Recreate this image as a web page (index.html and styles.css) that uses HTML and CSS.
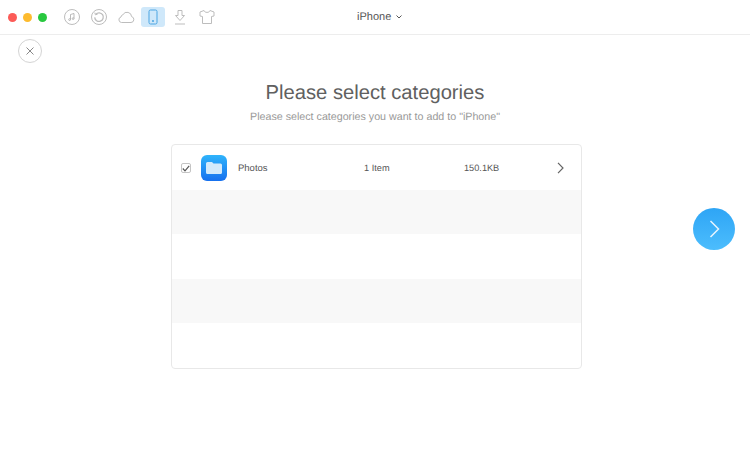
FILE: index.html
```html
<!DOCTYPE html>
<html lang="en">
<head>
    <meta charset="UTF-8">
    <meta name="viewport" content="width=device-width, initial-scale=1.0">
    <title>Please select categories</title>
    <link rel="stylesheet" href="styles.css">
</head>
<body>
    <div class="toolbar">
        <div class="lights">
            <span class="light red"></span>
            <span class="light yellow"></span>
            <span class="light green"></span>
        </div>
        <div class="tools">
            <span class="tool">
                <svg width="18" height="18" viewBox="0 0 18 18" fill="none" stroke="#bdbdbd">
                    <circle cx="9" cy="9" r="7.5"/>
                    <path d="M7.5 11.500V6.500L11 5.500V10.500" stroke="#aaa" stroke-width=".8"/>
                    <circle cx="6.600" cy="11.600" r=".9" stroke="#aaa" stroke-width=".8"/>
                    <circle cx="10.100" cy="10.600" r=".9" stroke="#aaa" stroke-width=".8"/>
                </svg>
            </span>
            <span class="tool">
                <svg width="18" height="18" viewBox="0 0 18 18" fill="none" stroke="#bdbdbd">
                    <circle cx="9" cy="9" r="7.500"/>
                    <path d="M5.800 6.200A4.300 4.300 0 1 1 4.700 9.400" stroke-width="1.300"/>
                    <path d="M4.800 4.600L5.400 6.800L7.600 6.200"/>
                </svg>
            </span>
            <span class="tool">
                <svg width="18" height="14" viewBox="0 0 18 14" fill="none" stroke="#bdbdbd">
                    <path d="M4.500 12.500H14a3 3 0 0 0 .6-5.900A4.600 4.600 0 0 0 6 4.600 2.800 2.800 0 0 0 4 7 2.800 2.800 0 0 0 4.500 12.500Z"/>
                </svg>
            </span>
            <span class="tool active">
                <svg width="10" height="16" viewBox="0 0 10 16" fill="none" stroke="#4aa5e3">
                    <rect x="1" y="1" width="8" height="14" rx="1.500"/>
                    <circle cx="5" cy="12" r=".6" fill="#4aa5e3"/>
                </svg>
            </span>
            <span class="tool">
                <svg width="14" height="17" viewBox="0 0 14 17" fill="none" stroke="#bdbdbd">
                    <path d="M5 1.500H9V6.500H11.500L7 11.500 2.500 6.500H5Z"/>
                    <path d="M2 15H12"/>
                </svg>
            </span>
            <span class="tool">
                <svg width="16" height="16" viewBox="0 0 16 16" fill="none" stroke="#bdbdbd">
                    <path d="M5 1.500L1 3V7L3.500 7.500V14.500H12.500V7.500L15 7V3L11 1.500C10.500 4 5.500 4 5 1.500Z"/>
                </svg>
            </span>
        </div>
        <div class="device">iPhone <span class="caret"><svg width="6" height="4" viewBox="0 0 6 4" fill="none" stroke="#555"><path d="M.5 .5L3 3 5.500 .5"/></svg></span></div>
    </div>

    <div class="main">
        <div class="close-row">
            <span class="close">
                <svg width="8" height="8" viewBox="0 0 8 8" fill="none" stroke="#888"><path d="M.5 .5L7.500 7.500M7.500 .5L.5 7.500"/></svg>
            </span>
        </div>
        <h1>Please select categories</h1>
        <p class="sub">Please select categories you want to add to "iPhone"</p>

        <div class="content">
            <div class="list">
                <div class="row">
                    <span class="check">
                        <svg width="8" height="7" viewBox="0 0 8 7" fill="none" stroke="#555" stroke-width="1.200"><path d="M.8 3.500L3 5.800 7.200 .8"/></svg>
                    </span>
                    <span class="app-icon">
                        <svg width="18" height="14" viewBox="0 0 18 14">
                            <path d="M1 2.500A1.500 1.500 0 0 1 2.500 1H7L8.500 2.500H15.500A1.500 1.500 0 0 1 17 4V11.500A1.500 1.500 0 0 1 15.500 13H2.500A1.500 1.500 0 0 1 1 11.500Z" fill="#d3eafb"/>
                        </svg>
                    </span>
                    <span class="name">Photos</span>
                    <span class="count">1 Item</span>
                    <span class="size">150.1KB</span>
                    <svg class="arrow" width="7" height="12" viewBox="0 0 7 12" fill="none" stroke="#666" stroke-width="1.200"><path d="M1 .8L6 6 1 11.200"/></svg>
                </div>
                <div class="row"></div>
                <div class="row"></div>
                <div class="row"></div>
                <div class="row"></div>
            </div>
            <span class="next">
                <svg width="11" height="18" viewBox="0 0 11 18" fill="none" stroke="#e8f5fe" stroke-width="1.500"><path d="M1.500 1L9.500 9 1.500 17"/></svg>
            </span>
        </div>
    </div>
</body>
</html>
```

FILE: styles.css
```css
body {
    margin: 0;
    height: 465px;
    overflow: hidden;
    background: white;
    font-family: "Liberation Sans", Arial, sans-serif;
    color: #555;
    text-rendering: geometricPrecision;
}
.toolbar {
    height: 34px;
    display: flex;
    align-items: center;
    position: relative;
    border-bottom: 1px solid #ededed;
}
.lights {
    display: flex;
    gap: 6px;
    margin-left: 8px;
}
.light {
    width: 9px;
    height: 9px;
    border-radius: 50%;
}
.red { background: #fc5b57; }
.yellow { background: #fdbb2e; }
.green { background: #28c83f; }
.tools {
    display: flex;
    align-items: center;
    gap: 3px;
    margin-left: 13px;
}
.tool {
    width: 24px;
    height: 20px;
    display: flex;
    align-items: center;
    justify-content: center;
    border-radius: 3px;
}
.tool.active {
    background: #cfe8fa;
}
.device {
    position: absolute;
    left: 357px;
    top: 10px;
    font-size: 11px;
    color: #555;
}
.caret {
    margin-left: 2px;
    vertical-align: 1px;
}
.close-row {
    padding: 4px 0 0 18px;
}
.close {
    width: 22px;
    height: 22px;
    border: 1px solid #d4d4d4;
    border-radius: 50%;
    display: flex;
    align-items: center;
    justify-content: center;
}
h1 {
    margin: 16px 0 0;
    text-align: center;
    font-size: 20.200px;
    line-height: 28px;
    font-weight: normal;
    color: #606060;
}
.sub {
    margin: 3px 0 0;
    text-align: center;
    font-size: 10.700px;
    line-height: 14px;
    color: #999;
}
.content {
    margin-top: 20px;
    padding-left: 171px;
    display: flex;
    align-items: flex-start;
}
.list {
    width: 409px;
    height: 223px;
    border: 1px solid #e8e8e8;
    border-radius: 4px;
    overflow: hidden;
}
.row {
    height: 44.500px;
    box-sizing: border-box;
    padding-top: 2px;
    display: flex;
    align-items: center;
    font-size: 9.500px;
    color: #555;
}
.row:nth-child(even) {
    background: #f8f8f8;
}
.check {
    width: 8px;
    height: 8px;
    margin-left: 9px;
    border: 1px solid #c4c4c4;
    border-radius: 2px;
    display: flex;
    align-items: center;
    justify-content: center;
}
.app-icon {
    width: 26px;
    height: 26px;
    margin-left: 10px;
    border-radius: 6px;
    background: linear-gradient(#2fb4fb, #1670ee);
    display: flex;
    align-items: center;
    justify-content: center;
}
.name {
    width: 126px;
    margin-left: 11px;
}
.count {
    width: 100px;
    font-size: 9.200px;
}
.size {
    width: 93px;
    font-size: 9.200px;
}
.next {
    width: 42px;
    height: 42px;
    margin: 64px 0 0 111px;
    border-radius: 50%;
    background: linear-gradient(#2ea5f5, #4cbdfd);
    display: flex;
    align-items: center;
    justify-content: center;
}
```
